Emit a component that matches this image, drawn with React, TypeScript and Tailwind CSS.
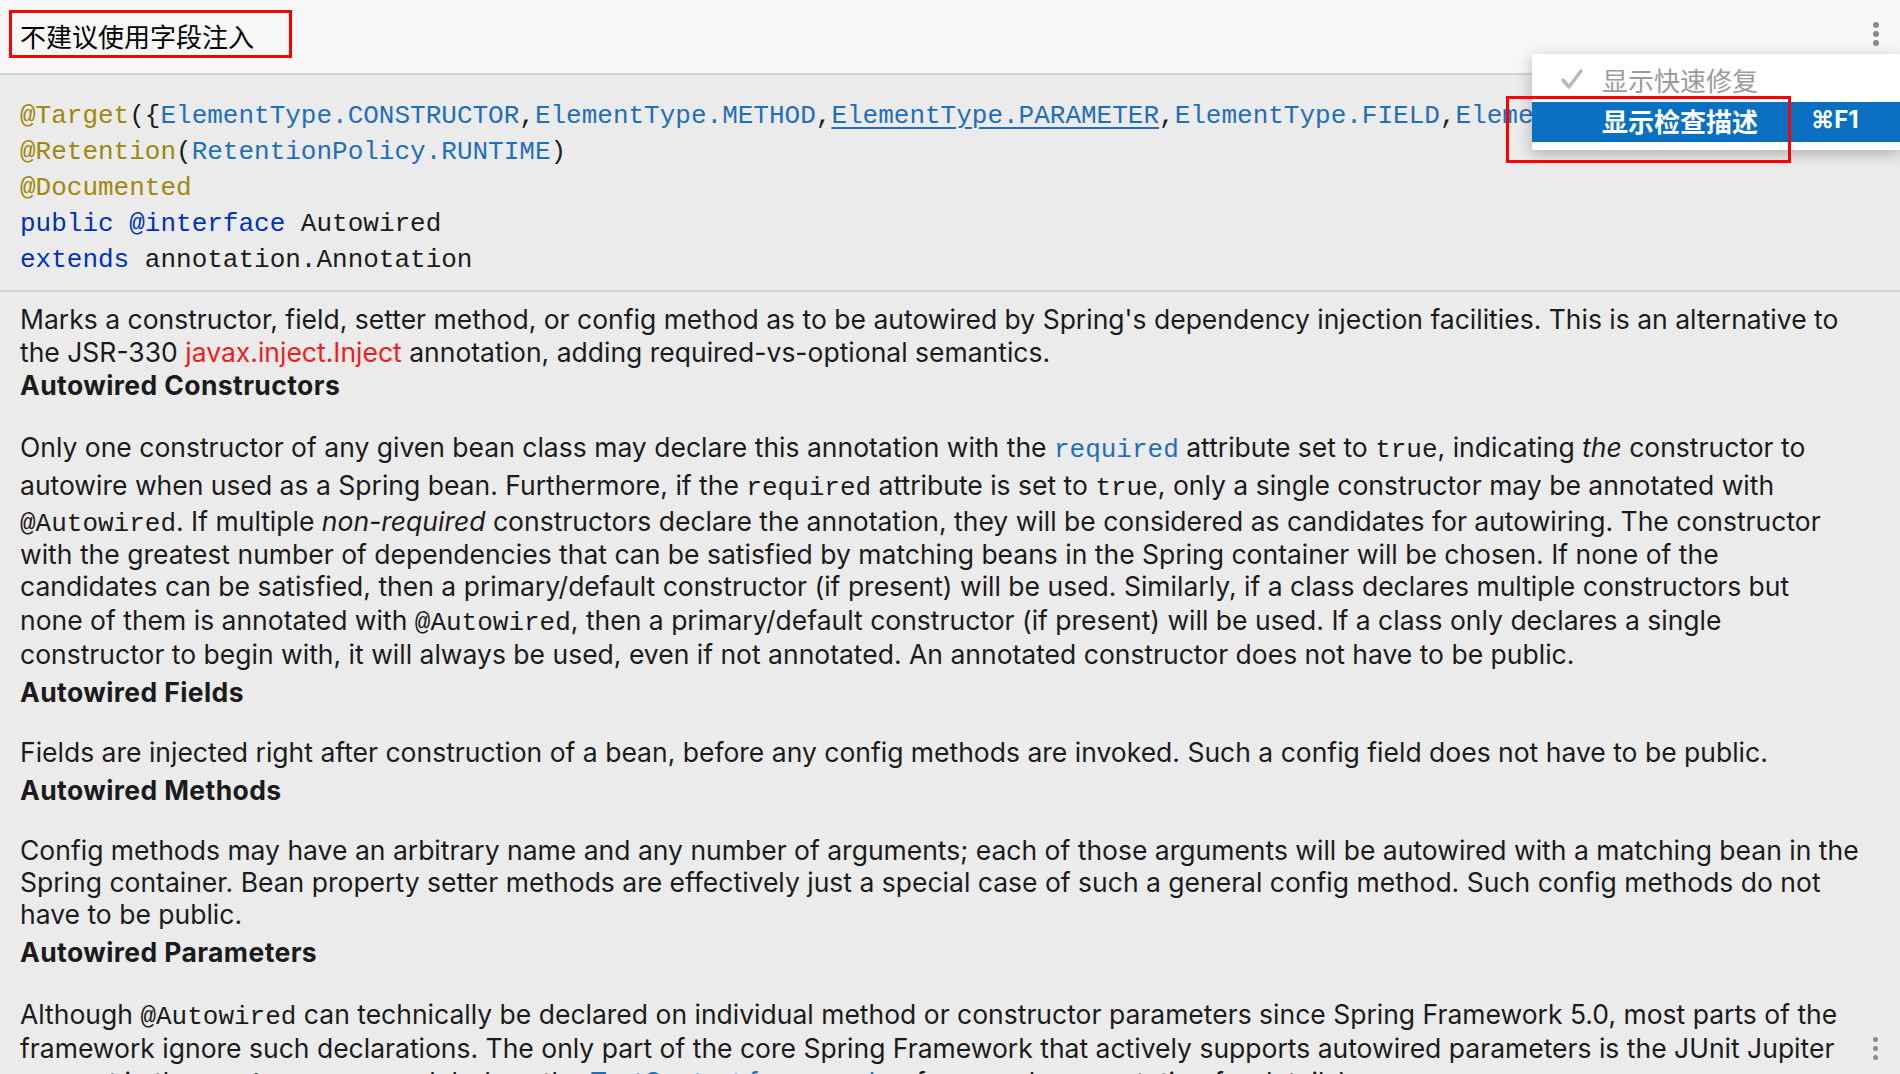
import React from 'react'

const mono = "font-['Liberation_Mono','DejaVu_Sans_Mono',monospace]"

function Code({ children, blue }: { children: React.ReactNode; blue?: boolean }) {
  return (
    <span className={`${mono} text-[26px] leading-none tracking-normal ${blue ? 'text-[#1f6fb8]' : ''}`}>
      {children}
    </span>
  )
}

function Dots({ size, gap }: { size: string; gap: string }) {
  return (
    <div className={`flex flex-col ${gap}`}>
      <span className={`${size} rounded-full bg-[#8a8a8a]`} />
      <span className={`${size} rounded-full bg-[#8a8a8a]`} />
      <span className={`${size} rounded-full bg-[#8a8a8a]`} />
    </div>
  )
}

function Heading({ children, first }: { children: React.ReactNode; first?: boolean }) {
  return (
    <h3 className={`${first ? '' : 'mt-[5px]'} mb-[27px] font-bold tracking-[0.4px]`}>{children}</h3>
  )
}

export default function App() {
  return (
    <div className="relative h-[1074px] w-[1900px] overflow-hidden bg-[#ebebeb] text-[#1b1b1b]">
      {/* title bar */}
      <header className="flex h-[75px] items-start border-b-2 border-[#d3d3d3] bg-[#f7f7f7] pl-[9px] pt-[10px]">
        <div className="flex h-[48px] w-[283px] items-center border-[3px] border-[#ff0000] pl-[8px] pt-[2px] font-['Noto_Sans_CJK_SC',sans-serif] text-[26px] text-black">
          不建议使用字段注入
        </div>
        <div className="absolute right-[21px] top-[22px]">
          <Dots size="h-[6px] w-[6px]" gap="gap-[3px]" />
        </div>
      </header>

      {/* signature */}
      <section className={`${mono} border-b-2 border-[#d3d3d3] pb-[12px] pl-[20px] pt-[23px] text-[26px] leading-[36px] whitespace-nowrap`}>
        <div>
          <span className="text-[#9e880d]">@Target</span>({'{'}
          <span className="text-[#1f6fb8]">ElementType.CONSTRUCTOR</span>,
          <span className="text-[#1f6fb8]">ElementType.METHOD</span>,
          <span className="text-[#1f6fb8] underline underline-offset-4">ElementType.PARAMETER</span>,
          <span className="text-[#1f6fb8]">ElementType.FIELD</span>,
          <span className="text-[#1f6fb8]">ElementType.ANNOTATION_TYPE</span>{'})'}
        </div>
        <div>
          <span className="text-[#9e880d]">@Retention</span>(
          <span className="text-[#1f6fb8]">RetentionPolicy.RUNTIME</span>)
        </div>
        <div className="text-[#9e880d]">@Documented</div>
        <div>
          <span className="text-[#0033b3]">public</span> <span className="text-[#0033b3]">@interface</span> Autowired
        </div>
        <div>
          <span className="text-[#0033b3]">extends</span> annotation.Annotation
        </div>
      </section>

      {/* description */}
      <article className="whitespace-nowrap pl-[20px] pt-[11px] font-['Inter',sans-serif] text-[26.5px] leading-[33px]">
        <p>
          Marks a constructor, field, setter method, or config method as to be autowired by Spring's dependency injection facilities. This is an alternative to
          <br />
          the JSR-330 <span className="text-[#f01c1c]">javax.inject.Inject</span> annotation, adding required-vs-optional semantics.
        </p>
        <Heading first>Autowired Constructors</Heading>
        <div>
          <div className="flex h-[37px] items-center">
            <span className="whitespace-pre">Only one constructor of any given bean class may declare this annotation with the <Code blue>required</Code> attribute set to <Code>true</Code>, indicating <i>the</i> constructor to</span>
          </div>
          <div className="flex h-[38px] items-center">
            <span className="whitespace-pre">autowire when used as a Spring bean. Furthermore, if the <Code>required</Code> attribute is set to <Code>true</Code>, only a single constructor may be annotated with</span>
          </div>
          <div className="flex h-[34px] items-center">
            <span className="whitespace-pre"><Code>@Autowired</Code>. If multiple <i>non-required</i> constructors declare the annotation, they will be considered as candidates for autowiring. The constructor</span>
          </div>
          <div className="flex h-[32px] items-center">
            with the greatest number of dependencies that can be satisfied by matching beans in the Spring container will be chosen. If none of the
          </div>
          <div className="flex h-[33px] items-center">
            candidates can be satisfied, then a primary/default constructor (if present) will be used. Similarly, if a class declares multiple constructors but
          </div>
          <div className="flex h-[35px] items-center">
            <span className="whitespace-pre">none of them is annotated with <Code>@Autowired</Code>, then a primary/default constructor (if present) will be used. If a class only declares a single</span>
          </div>
          <div className="flex h-[33px] items-center">
            constructor to begin with, it will always be used, even if not annotated. An annotated constructor does not have to be public.
          </div>
        </div>
        <Heading>Autowired Fields</Heading>
        <p>
          Fields are injected right after construction of a bean, before any config methods are invoked. Such a config field does not have to be public.
        </p>
        <Heading>Autowired Methods</Heading>
        <p className="leading-[32px]">
          Config methods may have an arbitrary name and any number of arguments; each of those arguments will be autowired with a matching bean in the
          <br />
          Spring container. Bean property setter methods are effectively just a special case of such a general config method. Such config methods do not
          <br />
          have to be public.
        </p>
        <h3 className="mb-[28px] mt-[6px] font-bold tracking-[0.4px]">Autowired Parameters</h3>
        <p className="leading-[34px]">
          Although <Code>@Autowired</Code> can technically be declared on individual method or constructor parameters since Spring Framework 5.0, most parts of the
          <br />
          framework ignore such declarations. The only part of the core Spring Framework that actively supports autowired parameters is the JUnit Jupiter
          <br />
          support in the <Code>spring-test</Code> module (see the <span className="text-[#1f6fb8]">TestContext framework</span> reference documentation for details).
        </p>
      </article>

      <div className="absolute bottom-[14px] right-[22px]">
        <Dots size="h-[5px] w-[5px]" gap="gap-[4px]" />
      </div>

      {/* popup menu */}
      <div className="absolute left-[1532px] top-[54px] w-[368px] bg-white pb-[8px] shadow-[0_4px_14px_rgba(0,0,0,0.25)] font-['Noto_Sans_CJK_SC',sans-serif] text-[26px]">
        <div className="flex h-[48px] items-center pt-[2px] text-[#9b9b9b]">
          <svg className="ml-[28px] mr-[18px]" width="24" height="22" viewBox="0 0 24 22" fill="none" stroke="#b8b8b8" strokeWidth="3.5" strokeLinecap="round" strokeLinejoin="round">
            <polyline points="3 12 9 19 21 3" />
          </svg>
          显示快速修复
        </div>
        <div className="flex h-[40px] items-center bg-[#0a70c2] pb-[4px] font-semibold text-white">
          <span className="ml-[70px]">显示检查描述</span>
          <span className="ml-[53px] font-['Inter',sans-serif] text-[24px] font-bold">⌘F1</span>
        </div>
      </div>
      <div className="absolute left-[1506px] top-[96px] h-[67px] w-[285px] border-[3px] border-[#ff0000]" />
    </div>
  )
}
